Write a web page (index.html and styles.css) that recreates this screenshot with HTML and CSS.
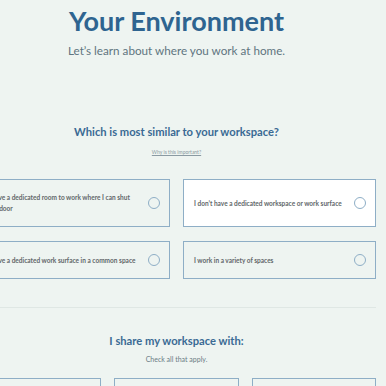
FILE: index.html
```html
<!DOCTYPE html>
<html lang="en">
<head>
    <meta charset="UTF-8">
    <meta name="viewport" content="width=device-width, initial-scale=1.0">
    <title>Your Environment</title>
    <link rel="stylesheet" href="styles.css">
</head>
<body>
    <div class="page">
        <header class="intro">
            <h1>Your Environment</h1>
            <p class="lead">Let’s learn about where you work at home.</p>
        </header>

        <section class="question first">
            <h2>Which is most similar to your workspace?</h2>
            <a class="why" href="#">Why is this important?</a>
            <div class="options two-col">
                <label class="option">
                    <span class="option-text">I have a dedicated room to work where I can shut the door</span>
                    <span class="radio"></span>
                </label>
                <label class="option selected">
                    <span class="option-text">I don’t have a dedicated workspace or work surface</span>
                    <span class="radio"></span>
                </label>
                <label class="option">
                    <span class="option-text">I have a dedicated work surface in a common space</span>
                    <span class="radio"></span>
                </label>
                <label class="option">
                    <span class="option-text">I work in a variety of spaces</span>
                    <span class="radio"></span>
                </label>
            </div>
        </section>

        <hr class="divider">

        <section class="question second">
            <h2>I share my workspace with:</h2>
            <p class="hint">Check all that apply.</p>
            <div class="options three-col">
                <label class="option"><span class="option-text">My partner</span></label>
                <label class="option"><span class="option-text">My kids</span></label>
                <label class="option"><span class="option-text">My roommates</span></label>
            </div>
        </section>
    </div>
</body>
</html>
```

FILE: styles.css
```css
:root {
    --primary-color: #2e6490;
    --heading-color: #3a6a94;
    --text-color: #5f7480;
    --border-color: #8eaec6;
    --background-color: #eef4f1;
}

* {
    box-sizing: border-box;
    margin: 0;
    padding: 0;
    font-family: 'Lato', 'Open Sans', sans-serif;
}

body {
    background-color: var(--background-color);
    overflow: hidden;
}

.page {
    width: 399px;
    margin-left: -23px;
    padding-top: 4px;
}

.intro {
    text-align: center;
}

h1 {
    color: var(--primary-color);
    font-size: 27px;
    font-weight: 700;
    line-height: 33px;
}

.lead {
    color: var(--text-color);
    font-size: 11.7px;
    margin-top: 6px;
}

.question {
    text-align: center;
}

.question.first {
    padding-top: 68px;
}

.question.second {
    padding-top: 26px;
}

h2 {
    color: var(--heading-color);
    font-size: 11.2px;
    font-weight: 700;
}

.why {
    display: inline-block;
    margin-top: 10px;
    font-size: 5px;
    color: #8a9aa2;
}

.hint {
    margin-top: 8px;
    font-size: 7px;
    color: #6b7c84;
}

.options {
    display: grid;
    gap: 14px 13px;
    margin-top: 22px;
    text-align: left;
}

.two-col {
    grid-template-columns: 1fr 1fr;
}

.three-col {
    grid-template-columns: 1fr 1fr 1fr;
    margin-top: 15px;
}

.option {
    display: flex;
    align-items: center;
    gap: 10px;
    padding: 12px 9px 12px 10px;
    border: 1px solid var(--border-color);
    min-height: 36px;
}

.option.selected {
    background-color: #ffffff;
}

.option-text {
    flex: 1;
    font-size: 6.5px;
    font-weight: 700;
    line-height: 11px;
    color: #62676a;
}

.radio {
    width: 12px;
    height: 12px;
    border: 1px solid var(--border-color);
    border-radius: 50%;
    flex-shrink: 0;
}

.divider {
    border: none;
    border-top: 1px solid #dfe7e4;
    margin-top: 28px;
    margin-left: 23px;
}
```
